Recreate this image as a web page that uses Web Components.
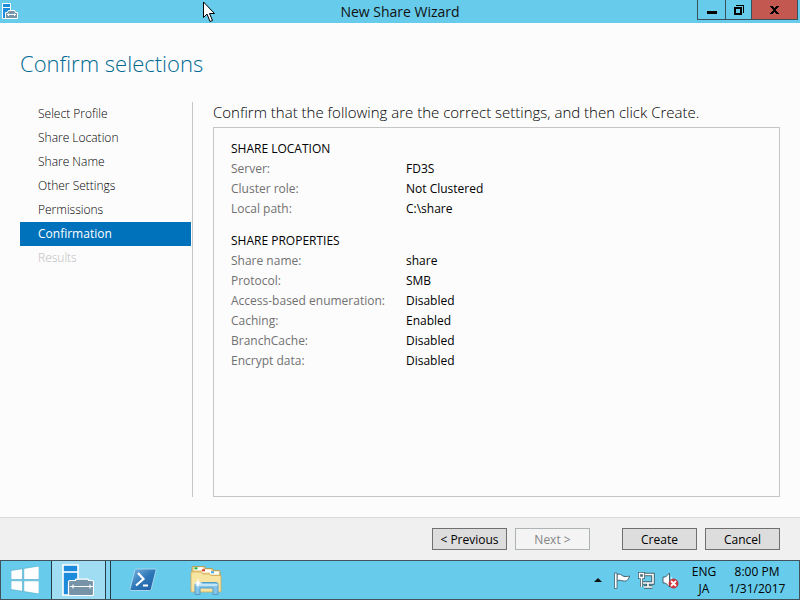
<!DOCTYPE html>
<html lang="en">
<head>
<meta charset="utf-8">
<title>New Share Wizard</title>
<style>
  html, body { height: 100%; margin: 0; }
  body {
    display: flex; flex-direction: column; min-height: 100vh;
    font: 12px/20px "Open Sans", "Noto Sans", sans-serif;
    color: #111; background: #fcfcfc; overflow: hidden;
    --sky: #67cbeb; --accent: #0072bc; --line: #c6c6c6;
  }
</style>
</head>
<body>
<wizard-window>
  <title-bar slot="title">New Share Wizard</title-bar>
  <span slot="heading">Confirm selections</span>
  <step-list slot="steps">
    <wizard-step>Select Profile</wizard-step>
    <wizard-step>Share Location</wizard-step>
    <wizard-step>Share Name</wizard-step>
    <wizard-step>Other Settings</wizard-step>
    <wizard-step>Permissions</wizard-step>
    <wizard-step current>Confirmation</wizard-step>
    <wizard-step disabled>Results</wizard-step>
  </step-list>
  <span slot="intro">Confirm that the following are the correct settings, and then click Create.</span>
  <settings-group heading="SHARE LOCATION" rows='[["Server:","FD3S"],["Cluster role:","Not Clustered"],["Local path:","C:\\share"]]'></settings-group>
  <settings-group heading="SHARE PROPERTIES" rows='[["Share name:","share"],["Protocol:","SMB"],["Access-based enumeration:","Disabled"],["Caching:","Enabled"],["BranchCache:","Disabled"],["Encrypt data:","Disabled"]]'></settings-group>
  <wizard-button slot="navigation">&lt; Previous</wizard-button>
  <wizard-button slot="navigation" disabled>Next &gt;</wizard-button>
  <wizard-button slot="actions">Create</wizard-button>
  <wizard-button slot="actions">Cancel</wizard-button>
</wizard-window>
<task-bar></task-bar>
<mouse-pointer></mouse-pointer>

<script>
const define = (name, html, setup) => {
  const template = document.createElement('template');
  template.innerHTML = html;
  customElements.define(name, class extends HTMLElement {
    connectedCallback() {
      if (this.shadowRoot) return;
      this.attachShadow({ mode: 'open' }).append(template.content.cloneNode(true));
      if (setup) setup(this, this.shadowRoot);
    }
  });
};

define('server-icon', `
  <style>:host { display: block; } svg { display: block; width: 100%; height: 100%; }</style>
  <svg viewBox="0 0 32 32" aria-hidden="true">
    <path d="M1 1h15v30H1z" fill="#1d8bdb" stroke="#fff" stroke-width="1.6"/>
    <path d="M1 8h15" stroke="#fff" stroke-width="1.6"/>
    <path d="M13.500 16.500v-.5q0-.8.8-.8h11.400q.8 0 .8.8v.5h3.500q1.500 0 1.500 1.500v12q0 1.500-1.500 1.500H8q-1.500 0-1.500-1.500V18q0-1.500 1.500-1.500z" fill="#7793a8" stroke="#fff" stroke-width="1.200"/>
    <path d="M8 22.500h23M11 20.500v4M28 20.500v4" stroke="#fff" stroke-width="1.200"/>
  </svg>`);

define('title-bar', `
  <style>
    :host { display: grid; grid-template-columns: 1fr auto 1fr; height: 23px; background: var(--sky); font-size: 14px; line-height: 23px; }
    .app { padding: 3px 2px; }
    h1 { margin: 0; font: inherit; }
    .controls { display: flex; justify-content: flex-end; padding-right: 2px; height: 20px; }
    button { box-sizing: border-box; width: 28px; margin: 0; padding: 0; border: 1px solid #3b4f5b; border-width: 0 0 1px 1px; background: none; display: grid; place-items: center; }
    .restore { width: 26px; }
    .close { width: 47px; background: #c2584f; border-right-width: 1px; }
    svg { display: block; }
  </style>
  <div class="app">
    <svg width="16" height="17" viewBox="0 0 16 17" aria-hidden="true">
      <path d="M.5.500h8v15h-8z" fill="#1d8bdb" stroke="#fff"/><path d="M1 4.500h7" stroke="#fff"/>
      <path d="M3.500 9.500h2q0-2 1.500-2h5q1.500 0 1.500 2h2v6h-12z" fill="#7793a8" stroke="#fff"/>
      <path d="M5 11.500h9M6.500 10.500v2.500M12.500 10.500v2.500" stroke="#fff"/>
    </svg>
  </div>
  <h1><slot></slot></h1>
  <div class="controls">
    <button type="button" aria-label="Minimize"><svg width="10" height="12"><path d="M0 7h10v3H0z"/></svg></button>
    <button class="restore" type="button" aria-label="Restore"><svg width="10" height="10"><path d="M2 0h8v8H9V1H2z"/><path d="M1 3h6v6H1z" fill="none" stroke="#000" stroke-width="2"/></svg></button>
    <button class="close" type="button" aria-label="Close"><svg width="9" height="8"><path d="M0 0h3v1h1v1h1V1h1V0h3v1H8v1H7v1H6v2h1v1h1v1h1v1H6V7H5V6H4v1H3v1H0V7h1V6h1V5h1V3H2V2H1V1H0z"/></svg></button>
  </div>`);

define('step-list', `
  <style>
    :host { display: block; border-right: 1px solid var(--line); padding-right: 1px; }
    nav { display: flex; flex-direction: column; }
  </style>
  <nav aria-label="Wizard steps"><slot></slot></nav>`);

define('wizard-step', `
  <style>
    :host { display: block; }
    a { display: block; padding: 0 18px; color: #000; text-decoration: none; font-weight: 300; line-height: 24px; font-size: 12px; }
    :host([current]) a { background: var(--accent); color: #fff; font-weight: 400; }
    :host([disabled]) a { color: #bbb; }
  </style>
  <a href="#"><slot></slot></a>`, (host, root) => {
    const link = root.querySelector('a');
    if (host.hasAttribute('current')) link.setAttribute('aria-current', 'step');
    if (host.hasAttribute('disabled')) { link.removeAttribute('href'); link.setAttribute('aria-disabled', 'true'); }
  });

define('settings-group', `
  <style>
    :host { display: block; }
    table { border-collapse: collapse; width: 100%; table-layout: fixed; }
    caption { text-align: left; color: #000; }
    th, td { padding: 0; text-align: left; font-weight: 400; }
    th { width: 175px; color: #717171; }
    td { color: #000; }
  </style>
  <table><caption></caption><tbody></tbody></table>`, (host, root) => {
    root.querySelector('caption').textContent = host.getAttribute('heading');
    const body = root.querySelector('tbody');
    for (const [label, value] of JSON.parse(host.getAttribute('rows'))) {
      const row = body.insertRow();
      const head = document.createElement('th');
      head.scope = 'row';
      head.textContent = label;
      row.append(head);
      row.insertCell().textContent = value;
    }
  });

define('wizard-button', `
  <style>
    :host { display: block; }
    button { box-sizing: border-box; display: block; min-width: 75px; height: 22px; margin: 0; padding: 1px 6px 0; border: 1px solid #707070; background: #ddd; font: inherit; line-height: 20px; color: #000; white-space: nowrap; }
    button:disabled { background: #f4f4f4; border-color: #adb2b5; color: #838383; }
  </style>
  <button type="button"><slot></slot></button>`, (host, root) => {
    root.querySelector('button').disabled = host.hasAttribute('disabled');
  });

define('wizard-window', `
  <style>
    :host { flex: 1; display: flex; flex-direction: column; min-height: 0; }
    h2 { margin: 0; padding: 24px 20px 23px; font-size: 22px; line-height: 32px; font-weight: 300; color: #006a92; }
    .body { flex: 1; display: grid; grid-template-columns: 173px 1fr; gap: 20px; padding: 0 20px 20px; min-height: 0; }
    main { display: flex; flex-direction: column; min-width: 0; }
    p { margin: 0; height: 25px; font-size: 15px; line-height: 20px; font-weight: 300; color: #000; white-space: nowrap; }
    .panel { flex: 1; border: 1px solid var(--line); padding: 11px 17px; display: flex; flex-direction: column; gap: 12px; }
    footer { display: flex; justify-content: flex-end; gap: 32px; padding: 10px 20px; border-top: 1px solid #d9d9d9; background: #f0f0f0; }
    .set { display: flex; gap: 8px; }
  </style>
  <slot name="title"></slot>
  <h2><slot name="heading"></slot></h2>
  <div class="body">
    <slot name="steps"></slot>
    <main>
      <p><slot name="intro"></slot></p>
      <div class="panel"><slot></slot></div>
    </main>
  </div>
  <footer><div class="set"><slot name="navigation"></slot></div><div class="set"><slot name="actions"></slot></div></footer>`);

define('task-bar', `
  <style>
    :host { display: flex; box-sizing: border-box; height: 40px; background: var(--sky); border: 1px solid #41545d; line-height: 17px; }
    button { border: 0; margin: 0; padding: 0; background: none; font: inherit; color: #000; display: grid; place-items: center; }
    svg { display: block; }
    .start { width: 50px; padding-right: 2px; }
    .open { width: 55px; background: #a0ddf3; border: solid #253c48; border-width: 0 1px; padding: 0 11px 0 10px; }
    .stack { width: 4px; background: #85d4ef; border-right: 1px solid #253c48; }
    .pinned { width: 62px; }
    .pinned.first { width: 64px; }
    .tray { margin-left: auto; display: flex; align-items: center; }
    server-icon { width: 32px; height: 32px; }
    .more { width: 24px; } .small { width: 24px; height: 38px; }
    .lang { width: 44px; display: block; } .clock { width: 62px; display: block; margin-right: 11px; white-space: nowrap; }
    .lang span, .clock span { display: block; text-align: center; }
  </style>
  <button class="start" type="button" aria-label="Start">
    <svg width="28" height="28" viewBox="0 0 28 28"><path d="M0 4.500 11.500 2.700v10.800H0zM12.800 2.500 28 0v13.500H12.800zM0 14.800h11.500v10.500L0 23.500zM12.800 14.800H28V28l-15.200-2.500z" fill="#fff" stroke="#4fa9c8" stroke-width=".6"/></svg>
  </button>
  <button class="open" type="button" aria-label="Server Manager"><server-icon></server-icon></button>
  <span class="stack"></span>
  <button class="pinned first" type="button" aria-label="Windows PowerShell">
    <svg width="28" height="24" viewBox="0 0 28 24">
      <defs><linearGradient id="ps" x2="1" y2="1"><stop stop-color="#7fb9e2"/><stop offset=".5" stop-color="#2e77b9"/><stop offset="1" stop-color="#1d5c9f"/></linearGradient></defs>
      <path d="M7.500 1H26q1.300 0 1 1.300L22.300 21q-.3 1.500-1.800 1.500H2q-1.300 0-1-1.300L5.700 2.500Q6 1 7.500 1z" fill="url(#ps)" stroke="#a5d5ee"/>
      <path d="M9 5 14.500 11 7 17.500M14 17.500h5" fill="none" stroke="#fff" stroke-width="2.200"/>
    </svg>
  </button>
  <button class="pinned" type="button" aria-label="File Explorer">
    <svg width="32" height="29" viewBox="0 0 32 29">
      <path d="M2 4V1.500Q2 .5 3 .5h11q1 0 1 1v1h7q1 0 1 1v1h6q1 0 1 1V25H2z" fill="#ead18a" stroke="#b99446" stroke-width=".8"/>
      <path d="M4 1.300h9v3H4zM12 3.500h9v3h-9zM20 5.500h9v3h-9z" fill="#fff"/>
      <path d="M4.500 1.300h3v2h-3z" fill="#18ad3c"/><path d="M12 3.300h3v2h-3z" fill="#d93426"/><path d="M21 5.300h3v2h-3z" fill="#3aa8ea"/>
      <path d="M1 6h10l2 2h6l2 1.500h10V25q0 1-1 1H2q-1 0-1-1z" fill="#f7e4a0" stroke="#cfaa58" stroke-width=".8"/>
      <path d="M5 28.500V18.500q0-2 2-2h19q2 0 2 2v10h-5V22H10v6.500z" fill="#83c4e9" stroke="#559bc6"/>
      <path d="M5.500 19h22" stroke="#c2e5f7" stroke-width="2"/>
      <path d="m8 12 1 4 4 1-4 1-1 4-1-4-4-1 4-1z" fill="#fff"/>
    </svg>
  </button>
  <div class="tray">
    <button class="more" type="button" aria-label="Show hidden icons"><svg width="8" height="4"><path d="M0 4 4 0l4 4z" fill="#111"/></svg></button>
    <button class="small" type="button" aria-label="Action Center">
      <svg width="16" height="17" viewBox="0 0 16 17"><path d="M3 2.500c4-1.500 5 2 8 2 2 0 3 0 4.500-.5-1 4-3 5.500-6 5-2.500-.5-4-1.500-6.500 0z" fill="#fff" stroke="#43606c"/><path d="M.5 1h2.500v15.500H.5z" fill="#fff" stroke="#43606c" stroke-width=".8"/></svg>
    </button>
    <button class="small" type="button" aria-label="Network">
      <svg width="17" height="17" viewBox="0 0 17 17"><path d="M6 2.500h9v8.500H5M10 11v4M6 15h8.500" fill="none" stroke="#43606c" stroke-width="3.500"/><path d="M6 2.500h9v8.500H5M10 11v4M6 15h8.500" fill="none" stroke="#fff" stroke-width="1.600"/><path d="M1.500 1.500h4v4h-4zM3.500 5.500V15" fill="#67cbeb" stroke="#43606c" stroke-width="3"/><path d="M1.500 1.500h4v4h-4zM3.500 5.500V15" fill="#43606c" stroke="#fff" stroke-width="1.400"/></svg>
    </button>
    <button class="small" type="button" aria-label="Volume muted">
      <svg width="17" height="17" viewBox="0 0 17 17"><path d="M1 5h2.500l4-4v14l-4-4H1z" fill="#fff" stroke="#43606c"/><path d="M9.500 5q1.500 3 0 6" fill="none" stroke="#fff"/><circle cx="11.500" cy="11.500" r="4.500" fill="#d5333a" stroke="#b32932" stroke-width=".8"/><path d="m9 9 5 5m0-5-5 5" stroke="#fff" stroke-width="1.800"/></svg>
    </button>
    <button class="lang" type="button"><span>ENG</span><span>JA</span></button>
    <button class="clock" type="button"><span>8:00 PM</span><span>1/31/2017</span></button>
  </div>`);

define('mouse-pointer', `
  <style>:host { position: absolute; left: 203px; top: 1px; pointer-events: none; } svg { display: block; }</style>
  <svg width="13" height="21" viewBox="0 0 13 21" aria-hidden="true"><path d="M.5 1v15.500L4 13l3 7.500 2.500-1L6.500 12.500h5z" fill="#fff" stroke="#000"/></svg>`);
</script>
</body>
</html>
